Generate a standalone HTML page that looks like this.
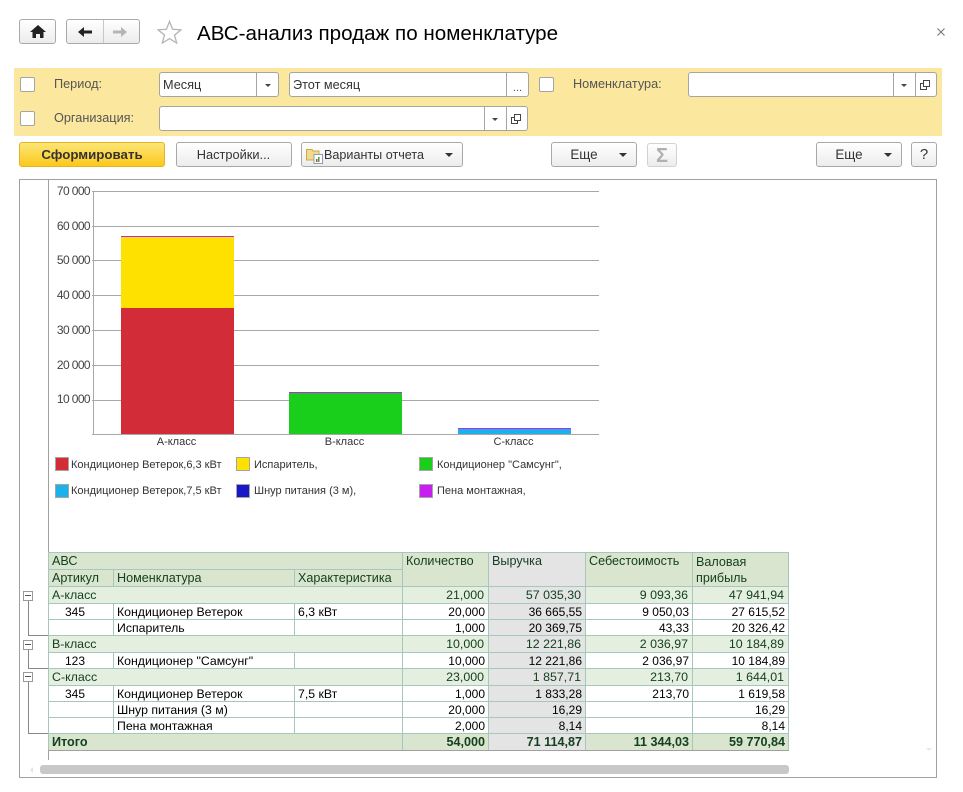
<!DOCTYPE html>
<html lang="ru"><head><meta charset="utf-8"><title>ABC</title>
<style>
html,body{margin:0;padding:0;background:#fff}
body{width:963px;height:792px;position:relative;overflow:hidden;font-family:"Liberation Sans",Arial,sans-serif;font-size:12px;color:#333}
.a{position:absolute;box-sizing:border-box}
.btn{position:absolute;box-sizing:border-box;height:25px;top:142px;border:1px solid #a9a9a9;border-radius:3px;background:linear-gradient(#fff,#ececec);line-height:24px;text-align:center;font-size:12.8px;color:#333}
.fld{position:absolute;box-sizing:border-box;height:25px;border:1px solid #a5a5a5;border-radius:3px;background:#fff;line-height:24px;padding-left:3px;font-size:12.7px;color:#333}
.dv{position:absolute;top:0;bottom:0;width:1px;background:#a5a5a5}
.cb{position:absolute;box-sizing:border-box;left:20px;width:15px;height:15px;border:1px solid #a5a5a5;border-radius:2px;background:#fff}
.lb{position:absolute;font-size:12.7px;color:#555;line-height:15px}
.tri{position:absolute;width:0;height:0;border-left:4px solid transparent;border-right:4px solid transparent;border-top:4px solid #333}
.tris{position:absolute;width:0;height:0;border-left:3px solid transparent;border-right:3px solid transparent;border-top:3px solid #444}
.yl{position:absolute;left:39px;width:51px;text-align:right;font-size:12px;letter-spacing:-.6px;color:#444;line-height:14px}
.gl{position:absolute;left:92px;width:507px;height:1px;background:#a8a8a8}
.bar{position:absolute;width:113px}
.cat{position:absolute;top:435px;font-size:11px;line-height:13px;width:113px;text-align:center;color:#333}
.sw{position:absolute;box-sizing:border-box;width:14px;height:14px;border:1px solid #a5a5a5}
.lg{position:absolute;font-size:11px;line-height:14px;white-space:nowrap;color:#333}
table{position:absolute;left:48px;top:552px;border-collapse:collapse;table-layout:fixed;width:740px;font-size:12.3px;color:#000}
td{padding:0 3px;border:1px solid #a6c8bc;overflow:hidden;white-space:nowrap;line-height:14px;vertical-align:middle;box-sizing:border-box}
.n td.r,.n td.ctr{font-size:12px}
.h td{background:#d9e5cf;color:#14401f;vertical-align:top;padding:1px 3px 0;font-size:12.6px}
.g td{background:#e4efdf;color:#14401f;text-align:right;padding-right:4px;font-size:12.4px}
.g td:first-child{text-align:left;padding-left:3px}
.t td{background:#d9e5cf;color:#14401f;font-weight:bold;text-align:right;border-top:1px solid #a0a0a0;border-bottom:1px solid #a0a0a0;font-size:12.6px;padding-right:3px}
.t td:first-child{text-align:left;padding-left:3px}
.r{text-align:right}
td.x{background:#e4e4e4!important}
.ctr{text-align:center;padding-left:0;padding-right:12px}
.bx{position:absolute;box-sizing:border-box;left:23px;width:10px;height:10px;border:1px solid #999;background:#fff}
.bx:after{content:"";position:absolute;left:1px;right:1px;top:3px;height:1px;background:#555}
.ln{position:absolute;background:#888}
</style></head><body>

<!-- top bar -->
<div class="btn" style="left:19px;top:19px;width:37px;height:25px"></div>
<svg class="a" style="left:30px;top:25px" width="16" height="13" viewBox="0 0 16 13"><path d="M8 0L0 7h2.500v6H6V9h4v4h3.500V7H16z" fill="#222"/></svg>
<div class="btn" style="left:66px;top:19px;width:74px;height:25px"></div>
<div class="a" style="left:103px;top:20px;width:1px;height:23px;background:#c8c8c8"></div>
<svg class="a" style="left:78px;top:26px" width="14" height="12" viewBox="0 0 14 12"><path d="M0 6L6 1V4.500H14V7.500H6V11z" fill="#222"/></svg>
<svg class="a" style="left:113px;top:26px" width="14" height="12" viewBox="0 0 14 12"><path d="M14 6L8 1V4.500H0V7.500H8V11z" fill="#b5b5b5"/></svg>
<svg class="a" style="left:157px;top:20px" width="25" height="24" viewBox="0 0 25 24"><path d="M12.500 1.500L15.600 9.300 24 9.800 17.500 15.100 19.700 23 12.500 18.600 5.300 23 7.500 15.100 1 9.800 9.400 9.300z" fill="#fff" stroke="#b4b4b4" stroke-width="1.300"/></svg>
<div class="a" style="left:197px;top:21px;font-size:20.6px;line-height:25px;color:#000;white-space:nowrap">АВС-анализ продаж по номенклатуре</div>
<svg class="a" style="left:936px;top:27px" width="10" height="10" viewBox="0 0 10 10"><path d="M1.500 1.500L8.500 8.500M8.500 1.500L1.500 8.500" stroke="#777" stroke-width="1.100"/></svg>

<!-- filter panel -->
<div class="a" style="left:14px;top:68px;width:928px;height:68px;background:#fbe89e"></div>
<div class="cb" style="top:77px"></div>
<div class="cb" style="top:111px"></div>
<div class="cb" style="left:539px;top:77px"></div>
<div class="lb" style="left:54px;top:77px">Период:</div>
<div class="lb" style="left:54px;top:111px">Организация:</div>
<div class="lb" style="left:573px;top:77px">Номенклатура:</div>

<div class="fld" style="left:159px;top:72px;width:120px">Месяц<div class="dv" style="left:96px"></div><div class="tris" style="left:105px;top:11px"></div></div>
<div class="fld" style="left:289px;top:72px;width:240px">Этот месяц<div class="dv" style="left:216px"></div><div class="a" style="left:217px;top:3px;width:21px;text-align:center;font-size:11px;color:#555">...</div></div>
<div class="fld" style="left:688px;top:72px;width:249px"><div class="dv" style="left:204px"></div><div class="dv" style="left:226px"></div><div class="tris" style="left:212px;top:11px"></div>
<svg class="a" style="left:231px;top:7px" width="11" height="10" viewBox="0 0 11 10"><path d="M3.500 .5H9.500V6.500H3.500zM3.500 3.500H.5V9.500H6.500V6.500" fill="none" stroke="#444"/></svg></div>
<div class="fld" style="left:159px;top:106px;width:369px"><div class="dv" style="left:324px"></div><div class="dv" style="left:346px"></div><div class="tris" style="left:332px;top:11px"></div>
<svg class="a" style="left:351px;top:7px" width="11" height="10" viewBox="0 0 11 10"><path d="M3.500 .5H9.500V6.500H3.500zM3.500 3.500H.5V9.500H6.500V6.500" fill="none" stroke="#444"/></svg></div>

<!-- buttons -->
<div class="btn" style="left:19px;width:146px;background:linear-gradient(#fbe677,#fcc81c);border-color:#e4b428;font-weight:bold;color:#333;font-size:13.3px">Сформировать</div>
<div class="btn" style="left:176px;width:116px;padding-right:1px">Настройки...</div>
<div class="btn" style="left:301px;width:162px;text-align:left;padding-left:22px;font-size:12.6px">Варианты отчета<div class="tri" style="left:143px;top:10px"></div>
<svg class="a" style="left:4px;top:5px" width="18" height="16" viewBox="0 0 18 16"><path d="M.5 3V1.500H6L7 3H13V12H.5z" fill="#f3d98a" stroke="#c9a94f"/><rect x="8" y="6.500" width="8.500" height="9" fill="#fff" stroke="#8aa0b8"/><rect x="10" y="11" width="1.500" height="3" fill="#d33"/><rect x="12" y="9" width="1.500" height="5" fill="#3a3"/></svg></div>
<div class="btn" style="left:551px;width:86px;padding-right:20px;font-size:13.4px">Еще<div class="tri" style="left:67px;top:10px"></div></div>
<div class="btn" style="left:647px;top:143px;width:30px;height:24px;border-color:#d2d2d2"></div>
<div class="a" style="left:647px;top:143px;width:30px;height:24px;text-align:center;font-size:20px;font-weight:bold;line-height:26px;color:#b0b0b0">Σ</div>
<div class="btn" style="left:816px;width:86px;padding-right:20px;font-size:13.4px">Еще<div class="tri" style="left:67px;top:10px"></div></div>
<div class="btn" style="left:911px;width:26px;font-size:15px">?</div>

<!-- report frame -->
<div class="a" style="left:19px;top:179px;width:918px;height:599px;border:1px solid #a0a0a0"></div>
<div class="a" style="left:48px;top:180px;width:1px;height:580px;background:#a0a0a0"></div>

<!-- chart -->
<div class="gl" style="top:191px"></div><div class="gl" style="top:226px"></div><div class="gl" style="top:260px"></div><div class="gl" style="top:295px"></div><div class="gl" style="top:330px"></div><div class="gl" style="top:365px"></div><div class="gl" style="top:400px"></div><div class="gl" style="top:434px"></div>
<div class="a" style="left:93px;top:191px;width:1px;height:244px;background:#a8a8a8"></div>
<div class="yl" style="top:184px">70 000</div><div class="yl" style="top:219px">60 000</div><div class="yl" style="top:253px">50 000</div><div class="yl" style="top:288px">40 000</div><div class="yl" style="top:323px">30 000</div><div class="yl" style="top:358px">20 000</div><div class="yl" style="top:392px">10 000</div>

<div class="bar" style="left:121px;top:236px;height:1px;background:#c81ef0"></div>
<div class="bar" style="left:121px;top:237px;height:71px;background:#ffe100"></div>
<div class="bar" style="left:121px;top:308px;height:126px;background:#d12c38"></div>
<div class="bar" style="left:289px;top:392px;height:1px;background:#c81ef0"></div>
<div class="bar" style="left:289px;top:393px;height:41px;background:#19cf1c"></div>
<div class="bar" style="left:458px;top:428px;height:1px;background:#c81ef0"></div>
<div class="bar" style="left:458px;top:429px;height:5px;background:#1ab2e8"></div>

<div class="cat" style="left:120px;top:436px">А-класс</div><div class="cat" style="left:288px;top:436px">В-класс</div><div class="cat" style="left:457px;top:436px">С-класс</div>

<div class="sw" style="left:55px;top:457px;background:#d12c38"></div><div class="lg" style="left:71px;top:458px">Кондиционер Ветерок,6,3 кВт</div>
<div class="sw" style="left:236px;top:457px;background:#ffe100"></div><div class="lg" style="left:254px;top:458px">Испаритель,</div>
<div class="sw" style="left:419px;top:457px;background:#19cf1c"></div><div class="lg" style="left:437px;top:458px">Кондиционер "Самсунг",</div>
<div class="sw" style="left:55px;top:484px;background:#1ab2e8"></div><div class="lg" style="left:71px;top:484px">Кондиционер Ветерок,7,5 кВт</div>
<div class="sw" style="left:236px;top:484px;background:#1818c8"></div><div class="lg" style="left:254px;top:484px">Шнур питания (3 м),</div>
<div class="sw" style="left:419px;top:484px;background:#c81ef0"></div><div class="lg" style="left:437px;top:484px">Пена монтажная,</div>

<!-- table -->
<table>
<colgroup><col style="width:65px"><col style="width:181px"><col style="width:108px"><col style="width:86px"><col style="width:97px"><col style="width:107px"><col style="width:96px"></colgroup>
<tr class="h" style="height:17px"><td colspan="3">АВС</td><td rowspan="2">Количество</td><td rowspan="2" class="x">Выручка</td><td rowspan="2">Себестоимость</td><td rowspan="2" style="white-space:normal;line-height:16px">Валовая прибыль</td></tr>
<tr class="h" style="height:17px"><td>Артикул</td><td>Номенклатура</td><td>Характеристика</td></tr>
<tr class="g" style="height:17px"><td colspan="3">А-класс</td><td>21,000</td><td class="x">57 035,30</td><td>9 093,36</td><td>47 941,94</td></tr>
<tr class="n" style="height:16px"><td class="ctr">345</td><td>Кондиционер Ветерок</td><td>6,3 кВт</td><td class="r">20,000</td><td class="r x">36 665,55</td><td class="r">9 050,03</td><td class="r">27 615,52</td></tr>
<tr class="n" style="height:16px"><td></td><td>Испаритель</td><td></td><td class="r">1,000</td><td class="r x">20 369,75</td><td class="r">43,33</td><td class="r">20 326,42</td></tr>
<tr class="g" style="height:17px"><td colspan="3">В-класс</td><td>10,000</td><td class="x">12 221,86</td><td>2 036,97</td><td>10 184,89</td></tr>
<tr class="n" style="height:16px"><td class="ctr">123</td><td>Кондиционер "Самсунг"</td><td></td><td class="r">10,000</td><td class="r x">12 221,86</td><td class="r">2 036,97</td><td class="r">10 184,89</td></tr>
<tr class="g" style="height:17px"><td colspan="3">С-класс</td><td>23,000</td><td class="x">1 857,71</td><td>213,70</td><td>1 644,01</td></tr>
<tr class="n" style="height:16px"><td class="ctr">345</td><td>Кондиционер Ветерок</td><td>7,5 кВт</td><td class="r">1,000</td><td class="r x">1 833,28</td><td class="r">213,70</td><td class="r">1 619,58</td></tr>
<tr class="n" style="height:16px"><td></td><td>Шнур питания (3 м)</td><td></td><td class="r">20,000</td><td class="r x">16,29</td><td class="r"></td><td class="r">16,29</td></tr>
<tr class="n" style="height:16px"><td></td><td>Пена монтажная</td><td></td><td class="r">2,000</td><td class="r x">8,14</td><td class="r"></td><td class="r">8,14</td></tr>
<tr class="t" style="height:17px"><td colspan="3">Итого</td><td>54,000</td><td class="x">71 114,87</td><td>11 344,03</td><td>59 770,84</td></tr>
</table>

<!-- tree -->
<div class="ln" style="left:28px;top:600px;width:1px;height:35px"></div><div class="ln" style="left:28px;top:635px;width:20px;height:1px"></div>
<div class="ln" style="left:28px;top:649px;width:1px;height:19px"></div><div class="ln" style="left:28px;top:668px;width:20px;height:1px"></div>
<div class="ln" style="left:28px;top:682px;width:1px;height:51px"></div><div class="ln" style="left:28px;top:733px;width:20px;height:1px"></div>
<div class="bx" style="top:591px"></div><div class="bx" style="top:640px"></div><div class="bx" style="top:672px"></div>

<!-- scrollbar -->
<div class="a" style="left:40px;top:765px;width:749px;height:9px;background:#c8c8c8;border-radius:3px"></div>
<div class="a" style="left:30px;top:767px;width:0;height:0;border-top:3px solid transparent;border-bottom:3px solid transparent;border-right:3px solid #e4e4e4"></div>
<div class="a" style="left:926px;top:748px;width:0;height:0;border-left:3px solid transparent;border-right:3px solid transparent;border-top:3px solid #e8e8e8"></div>
</body></html>
